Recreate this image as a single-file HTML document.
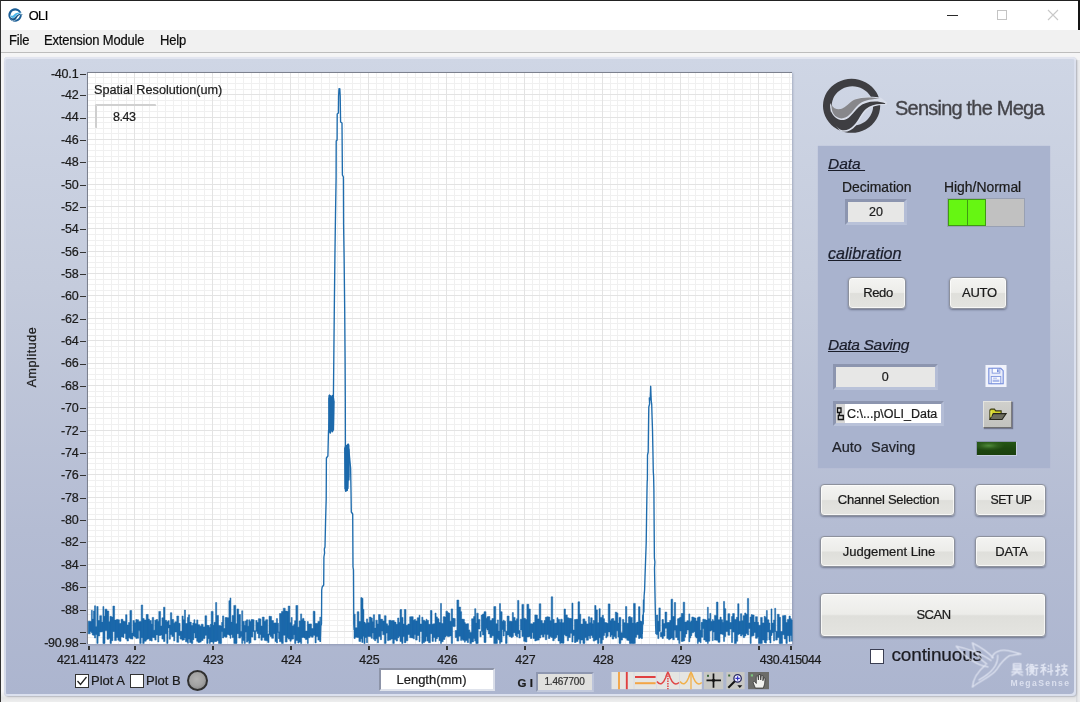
<!DOCTYPE html>
<html><head><meta charset="utf-8"><title>OLI</title>
<style>
*{box-sizing:border-box;margin:0;padding:0}
html,body{width:1080px;height:702px;overflow:hidden;background:#fff}
body{font-family:"Liberation Sans",sans-serif;color:#1c1c1c;position:relative;font-size:13px;-webkit-text-stroke:.22px currentColor}
.abs{position:absolute}
#win{position:absolute;left:0;top:0;width:1080px;height:702px;background:linear-gradient(180deg,#f5f5f6 0,#f5f5f6 690px,#e4e5e6 697px,#f0f0f0 702px);border-top:1px solid #222;border-left:1px solid #333}
#title{position:absolute;left:1px;top:1px;width:1078px;height:29px;background:#fff}
#rshadow{position:absolute;left:1078px;top:0;width:2px;height:31px;background:#151515}
#menu{position:absolute;left:1px;top:30px;width:1079px;height:22px;background:#f1f1f1}
#menuline{position:absolute;left:1px;top:52px;width:1079px;height:1px;background:#bdbdbd}
#menu span{position:absolute;top:1.500px;font-size:14.200px;color:#0c0c0c;white-space:nowrap;letter-spacing:-.2px;display:inline-block;transform:scaleX(.915);transform-origin:0 0}
#panel{position:absolute;left:4px;top:57px;width:1072px;height:638.500px;border-radius:4px;
 background:linear-gradient(180deg,#cfd6e5 0%,#c4cbdc 36%,#b4bcd3 74%,#acb5cf 100%);
 box-shadow:inset 0 2px 0 #e2e5f0, inset 2px 0 0 #d6dbea, inset -2px -2px 0 #dbe0ee, 1px 1px 1.500px #b4b6be}
#plot{position:absolute;left:87px;top:72px;width:705px;height:572px;background:#fff;border-top:1px solid #7c818e;border-left:1px solid #7c818e;box-shadow:1px 1px 2px rgba(90,100,130,.35)}
svg{position:absolute;left:0;top:0}
.gm{stroke:#f0f0f0;stroke-width:1}
.gM{stroke:#e3e3e3;stroke-width:1}
.yl{position:absolute;left:19.400px;width:59px;text-align:right;font-size:12.5px;height:18px;line-height:18px;color:#1b1b1b;letter-spacing:-.2px}
.ytk{position:absolute;left:80px;width:6px;height:1.6px;background:#333}
.xl{position:absolute;top:651px;width:40px;text-align:center;font-size:12.400px;height:18px;line-height:18px;color:#1b1b1b;letter-spacing:-.2px}
.xtk{position:absolute;top:646px;width:1.6px;height:4px;background:#333}
.t{position:absolute;white-space:nowrap;color:#1b1b1b}
.btn{position:absolute;border-radius:4px;background:linear-gradient(180deg,#f4f4f2 0%,#ecece9 48%,#dfdfdb 52%,#e4e4e0 100%);
 border:1px solid #8d919c;box-shadow:0 1px 2px rgba(60,65,85,.55), inset 0 0 0 1px rgba(255,255,255,.7);
 text-align:center;font-size:13px;color:#1a1a1a;white-space:nowrap}
.sunk{position:absolute;background:#e7e7e6;border:3px solid;border-color:#8c95af #b4bdd6 #b9c2d9 #8c95af;text-align:center;font-size:12.5px}
.hd{position:absolute;font-style:italic;font-size:15.5px;text-decoration:underline;color:#1a1d2a;white-space:pre}
.cb{position:absolute;width:14px;height:14px;background:#fff;border:1px solid #333}
#root{position:absolute;left:0;top:0;width:1080px;height:702px;overflow:hidden;will-change:transform;transform:translateZ(0)}
</style></head><body><div id="root">
<div id="win"></div>
<div id="title"></div>
<div id="rshadow"></div>
<!-- title icon -->
<svg class="abs" style="left:0;top:0" width="60" height="30" viewBox="0 0 60 30">
 <g transform="translate(6.500,6.600) scale(0.02334)">
  <path fill-rule="evenodd" fill="#1c5f97" d="M367 72 A287 287 0 1 1 366.900 72 Z M375 167 A195 195 0 1 0 375.100 167 Z"/>
  <path fill="#ffffff" d="M150 330 C175 385 215 400 260 392 C310 380 340 320 400 293 C470 262 580 262 662 278 L722 325 L717 352 C630 348 570 365 522 402 C472 447 452 512 407 562 C365 610 310 632 258 614 C200 560 150 450 150 330 Z"/>
  <path fill="#46b4ea" d="M165 335 C185 385 215 398 260 392 C310 380 345 312 400 287 C470 258 580 260 652 282 C580 290 500 300 450 335 C400 372 370 440 310 475 C260 500 210 480 185 440 C170 410 163 375 165 335 Z"/>
  <path fill="#1a5788" d="M158 410 C190 480 240 510 300 498 C350 485 385 420 440 370 C500 320 600 300 706 333 L700 342 C620 335 560 350 510 390 C460 435 440 500 395 550 C350 600 300 615 258 600 C190 560 150 480 158 410 Z"/>
 </g>
</svg>
<div class="t" style="left:28.700px;top:7.600px;font-size:12.800px;color:#000;letter-spacing:-.55px">OLI</div>
<!-- window buttons -->
<div class="abs" style="left:947px;top:14.500px;width:11px;height:1.200px;background:#2a2a2a"></div>
<div class="abs" style="left:997px;top:10px;width:10px;height:10px;border:1px solid #c4c4c4"></div>
<svg class="abs" style="left:1047px;top:9px" width="12" height="12"><path d="M1 1 L11 11 M11 1 L1 11" stroke="#c8c8c8" stroke-width="1.1" fill="none"/></svg>

<div id="menu"><span style="left:7.500px">File</span><span style="left:42.500px">Extension Module</span><span style="left:158.500px">Help</span></div>
<div id="menuline"></div>
<div class="abs" style="left:1076px;top:60px;width:4px;height:642px;background:linear-gradient(90deg,#d4d6da,#e8e9eb 60%,#ececee)"></div>
<div id="panel"></div>

<!-- plot -->
<div id="plot"></div>
<svg width="1080" height="702" viewBox="0 0 1080 702">
<g>
<line x1="95.5" y1="73.0" x2="95.5" y2="644.0" class="gm"/>
<line x1="103.5" y1="73.0" x2="103.5" y2="644.0" class="gm"/>
<line x1="111.5" y1="73.0" x2="111.5" y2="644.0" class="gm"/>
<line x1="118.5" y1="73.0" x2="118.5" y2="644.0" class="gm"/>
<line x1="126.5" y1="73.0" x2="126.5" y2="644.0" class="gm"/>
<line x1="134.5" y1="73.0" x2="134.5" y2="644.0" class="gm"/>
<line x1="142.5" y1="73.0" x2="142.5" y2="644.0" class="gm"/>
<line x1="149.5" y1="73.0" x2="149.5" y2="644.0" class="gm"/>
<line x1="157.5" y1="73.0" x2="157.5" y2="644.0" class="gm"/>
<line x1="165.5" y1="73.0" x2="165.5" y2="644.0" class="gm"/>
<line x1="173.5" y1="73.0" x2="173.5" y2="644.0" class="gm"/>
<line x1="181.5" y1="73.0" x2="181.5" y2="644.0" class="gm"/>
<line x1="188.5" y1="73.0" x2="188.5" y2="644.0" class="gm"/>
<line x1="196.5" y1="73.0" x2="196.5" y2="644.0" class="gm"/>
<line x1="204.5" y1="73.0" x2="204.5" y2="644.0" class="gm"/>
<line x1="212.5" y1="73.0" x2="212.5" y2="644.0" class="gm"/>
<line x1="220.5" y1="73.0" x2="220.5" y2="644.0" class="gm"/>
<line x1="227.5" y1="73.0" x2="227.5" y2="644.0" class="gm"/>
<line x1="235.5" y1="73.0" x2="235.5" y2="644.0" class="gm"/>
<line x1="243.5" y1="73.0" x2="243.5" y2="644.0" class="gm"/>
<line x1="251.5" y1="73.0" x2="251.5" y2="644.0" class="gm"/>
<line x1="259.5" y1="73.0" x2="259.5" y2="644.0" class="gm"/>
<line x1="266.5" y1="73.0" x2="266.5" y2="644.0" class="gm"/>
<line x1="274.5" y1="73.0" x2="274.5" y2="644.0" class="gm"/>
<line x1="282.5" y1="73.0" x2="282.5" y2="644.0" class="gm"/>
<line x1="290.5" y1="73.0" x2="290.5" y2="644.0" class="gm"/>
<line x1="298.5" y1="73.0" x2="298.5" y2="644.0" class="gm"/>
<line x1="305.5" y1="73.0" x2="305.5" y2="644.0" class="gm"/>
<line x1="313.5" y1="73.0" x2="313.5" y2="644.0" class="gm"/>
<line x1="321.5" y1="73.0" x2="321.5" y2="644.0" class="gm"/>
<line x1="329.5" y1="73.0" x2="329.5" y2="644.0" class="gm"/>
<line x1="337.5" y1="73.0" x2="337.5" y2="644.0" class="gm"/>
<line x1="344.5" y1="73.0" x2="344.5" y2="644.0" class="gm"/>
<line x1="352.5" y1="73.0" x2="352.5" y2="644.0" class="gm"/>
<line x1="360.5" y1="73.0" x2="360.5" y2="644.0" class="gm"/>
<line x1="368.5" y1="73.0" x2="368.5" y2="644.0" class="gm"/>
<line x1="376.5" y1="73.0" x2="376.5" y2="644.0" class="gm"/>
<line x1="383.5" y1="73.0" x2="383.5" y2="644.0" class="gm"/>
<line x1="391.5" y1="73.0" x2="391.5" y2="644.0" class="gm"/>
<line x1="399.5" y1="73.0" x2="399.5" y2="644.0" class="gm"/>
<line x1="407.5" y1="73.0" x2="407.5" y2="644.0" class="gm"/>
<line x1="415.5" y1="73.0" x2="415.5" y2="644.0" class="gm"/>
<line x1="422.5" y1="73.0" x2="422.5" y2="644.0" class="gm"/>
<line x1="430.5" y1="73.0" x2="430.5" y2="644.0" class="gm"/>
<line x1="438.5" y1="73.0" x2="438.5" y2="644.0" class="gm"/>
<line x1="446.5" y1="73.0" x2="446.5" y2="644.0" class="gm"/>
<line x1="454.5" y1="73.0" x2="454.5" y2="644.0" class="gm"/>
<line x1="461.5" y1="73.0" x2="461.5" y2="644.0" class="gm"/>
<line x1="469.5" y1="73.0" x2="469.5" y2="644.0" class="gm"/>
<line x1="477.5" y1="73.0" x2="477.5" y2="644.0" class="gm"/>
<line x1="485.5" y1="73.0" x2="485.5" y2="644.0" class="gm"/>
<line x1="493.5" y1="73.0" x2="493.5" y2="644.0" class="gm"/>
<line x1="500.5" y1="73.0" x2="500.5" y2="644.0" class="gm"/>
<line x1="508.5" y1="73.0" x2="508.5" y2="644.0" class="gm"/>
<line x1="516.5" y1="73.0" x2="516.5" y2="644.0" class="gm"/>
<line x1="524.5" y1="73.0" x2="524.5" y2="644.0" class="gm"/>
<line x1="532.5" y1="73.0" x2="532.5" y2="644.0" class="gm"/>
<line x1="539.5" y1="73.0" x2="539.5" y2="644.0" class="gm"/>
<line x1="547.5" y1="73.0" x2="547.5" y2="644.0" class="gm"/>
<line x1="555.5" y1="73.0" x2="555.5" y2="644.0" class="gm"/>
<line x1="563.5" y1="73.0" x2="563.5" y2="644.0" class="gm"/>
<line x1="571.5" y1="73.0" x2="571.5" y2="644.0" class="gm"/>
<line x1="578.5" y1="73.0" x2="578.5" y2="644.0" class="gm"/>
<line x1="586.5" y1="73.0" x2="586.5" y2="644.0" class="gm"/>
<line x1="594.5" y1="73.0" x2="594.5" y2="644.0" class="gm"/>
<line x1="602.5" y1="73.0" x2="602.5" y2="644.0" class="gm"/>
<line x1="610.5" y1="73.0" x2="610.5" y2="644.0" class="gm"/>
<line x1="617.5" y1="73.0" x2="617.5" y2="644.0" class="gm"/>
<line x1="625.5" y1="73.0" x2="625.5" y2="644.0" class="gm"/>
<line x1="633.5" y1="73.0" x2="633.5" y2="644.0" class="gm"/>
<line x1="641.5" y1="73.0" x2="641.5" y2="644.0" class="gm"/>
<line x1="649.5" y1="73.0" x2="649.5" y2="644.0" class="gm"/>
<line x1="656.5" y1="73.0" x2="656.5" y2="644.0" class="gm"/>
<line x1="664.5" y1="73.0" x2="664.5" y2="644.0" class="gm"/>
<line x1="672.5" y1="73.0" x2="672.5" y2="644.0" class="gm"/>
<line x1="680.5" y1="73.0" x2="680.5" y2="644.0" class="gm"/>
<line x1="688.5" y1="73.0" x2="688.5" y2="644.0" class="gm"/>
<line x1="695.5" y1="73.0" x2="695.5" y2="644.0" class="gm"/>
<line x1="703.5" y1="73.0" x2="703.5" y2="644.0" class="gm"/>
<line x1="711.5" y1="73.0" x2="711.5" y2="644.0" class="gm"/>
<line x1="719.5" y1="73.0" x2="719.5" y2="644.0" class="gm"/>
<line x1="727.5" y1="73.0" x2="727.5" y2="644.0" class="gm"/>
<line x1="734.5" y1="73.0" x2="734.5" y2="644.0" class="gm"/>
<line x1="742.5" y1="73.0" x2="742.5" y2="644.0" class="gm"/>
<line x1="750.5" y1="73.0" x2="750.5" y2="644.0" class="gm"/>
<line x1="758.5" y1="73.0" x2="758.5" y2="644.0" class="gm"/>
<line x1="766.5" y1="73.0" x2="766.5" y2="644.0" class="gm"/>
<line x1="773.5" y1="73.0" x2="773.5" y2="644.0" class="gm"/>
<line x1="781.5" y1="73.0" x2="781.5" y2="644.0" class="gm"/>
<line x1="789.5" y1="73.0" x2="789.5" y2="644.0" class="gm"/>
<line x1="88.0" y1="77.5" x2="792.0" y2="77.5" class="gm"/>
<line x1="88.0" y1="83.5" x2="792.0" y2="83.5" class="gm"/>
<line x1="88.0" y1="89.5" x2="792.0" y2="89.5" class="gm"/>
<line x1="88.0" y1="94.5" x2="792.0" y2="94.5" class="gm"/>
<line x1="88.0" y1="100.5" x2="792.0" y2="100.5" class="gm"/>
<line x1="88.0" y1="105.5" x2="792.0" y2="105.5" class="gm"/>
<line x1="88.0" y1="111.5" x2="792.0" y2="111.5" class="gm"/>
<line x1="88.0" y1="117.5" x2="792.0" y2="117.5" class="gm"/>
<line x1="88.0" y1="122.5" x2="792.0" y2="122.5" class="gm"/>
<line x1="88.0" y1="128.5" x2="792.0" y2="128.5" class="gm"/>
<line x1="88.0" y1="133.5" x2="792.0" y2="133.5" class="gm"/>
<line x1="88.0" y1="139.5" x2="792.0" y2="139.5" class="gm"/>
<line x1="88.0" y1="144.5" x2="792.0" y2="144.5" class="gm"/>
<line x1="88.0" y1="150.5" x2="792.0" y2="150.5" class="gm"/>
<line x1="88.0" y1="156.5" x2="792.0" y2="156.5" class="gm"/>
<line x1="88.0" y1="161.5" x2="792.0" y2="161.5" class="gm"/>
<line x1="88.0" y1="167.5" x2="792.0" y2="167.5" class="gm"/>
<line x1="88.0" y1="172.5" x2="792.0" y2="172.5" class="gm"/>
<line x1="88.0" y1="178.5" x2="792.0" y2="178.5" class="gm"/>
<line x1="88.0" y1="184.5" x2="792.0" y2="184.5" class="gm"/>
<line x1="88.0" y1="189.5" x2="792.0" y2="189.5" class="gm"/>
<line x1="88.0" y1="195.5" x2="792.0" y2="195.5" class="gm"/>
<line x1="88.0" y1="200.5" x2="792.0" y2="200.5" class="gm"/>
<line x1="88.0" y1="206.5" x2="792.0" y2="206.5" class="gm"/>
<line x1="88.0" y1="212.5" x2="792.0" y2="212.5" class="gm"/>
<line x1="88.0" y1="217.5" x2="792.0" y2="217.5" class="gm"/>
<line x1="88.0" y1="223.5" x2="792.0" y2="223.5" class="gm"/>
<line x1="88.0" y1="228.5" x2="792.0" y2="228.5" class="gm"/>
<line x1="88.0" y1="234.5" x2="792.0" y2="234.5" class="gm"/>
<line x1="88.0" y1="240.5" x2="792.0" y2="240.5" class="gm"/>
<line x1="88.0" y1="245.5" x2="792.0" y2="245.5" class="gm"/>
<line x1="88.0" y1="251.5" x2="792.0" y2="251.5" class="gm"/>
<line x1="88.0" y1="256.5" x2="792.0" y2="256.5" class="gm"/>
<line x1="88.0" y1="262.5" x2="792.0" y2="262.5" class="gm"/>
<line x1="88.0" y1="267.5" x2="792.0" y2="267.5" class="gm"/>
<line x1="88.0" y1="273.5" x2="792.0" y2="273.5" class="gm"/>
<line x1="88.0" y1="279.5" x2="792.0" y2="279.5" class="gm"/>
<line x1="88.0" y1="284.5" x2="792.0" y2="284.5" class="gm"/>
<line x1="88.0" y1="290.5" x2="792.0" y2="290.5" class="gm"/>
<line x1="88.0" y1="295.5" x2="792.0" y2="295.5" class="gm"/>
<line x1="88.0" y1="301.5" x2="792.0" y2="301.5" class="gm"/>
<line x1="88.0" y1="307.5" x2="792.0" y2="307.5" class="gm"/>
<line x1="88.0" y1="312.5" x2="792.0" y2="312.5" class="gm"/>
<line x1="88.0" y1="318.5" x2="792.0" y2="318.5" class="gm"/>
<line x1="88.0" y1="323.5" x2="792.0" y2="323.5" class="gm"/>
<line x1="88.0" y1="329.5" x2="792.0" y2="329.5" class="gm"/>
<line x1="88.0" y1="335.5" x2="792.0" y2="335.5" class="gm"/>
<line x1="88.0" y1="340.5" x2="792.0" y2="340.5" class="gm"/>
<line x1="88.0" y1="346.5" x2="792.0" y2="346.5" class="gm"/>
<line x1="88.0" y1="351.5" x2="792.0" y2="351.5" class="gm"/>
<line x1="88.0" y1="357.5" x2="792.0" y2="357.5" class="gm"/>
<line x1="88.0" y1="363.5" x2="792.0" y2="363.5" class="gm"/>
<line x1="88.0" y1="368.5" x2="792.0" y2="368.5" class="gm"/>
<line x1="88.0" y1="374.5" x2="792.0" y2="374.5" class="gm"/>
<line x1="88.0" y1="379.5" x2="792.0" y2="379.5" class="gm"/>
<line x1="88.0" y1="385.5" x2="792.0" y2="385.5" class="gm"/>
<line x1="88.0" y1="391.5" x2="792.0" y2="391.5" class="gm"/>
<line x1="88.0" y1="396.5" x2="792.0" y2="396.5" class="gm"/>
<line x1="88.0" y1="402.5" x2="792.0" y2="402.5" class="gm"/>
<line x1="88.0" y1="407.5" x2="792.0" y2="407.5" class="gm"/>
<line x1="88.0" y1="413.5" x2="792.0" y2="413.5" class="gm"/>
<line x1="88.0" y1="418.5" x2="792.0" y2="418.5" class="gm"/>
<line x1="88.0" y1="424.5" x2="792.0" y2="424.5" class="gm"/>
<line x1="88.0" y1="430.5" x2="792.0" y2="430.5" class="gm"/>
<line x1="88.0" y1="435.5" x2="792.0" y2="435.5" class="gm"/>
<line x1="88.0" y1="441.5" x2="792.0" y2="441.5" class="gm"/>
<line x1="88.0" y1="446.5" x2="792.0" y2="446.5" class="gm"/>
<line x1="88.0" y1="452.5" x2="792.0" y2="452.5" class="gm"/>
<line x1="88.0" y1="458.5" x2="792.0" y2="458.5" class="gm"/>
<line x1="88.0" y1="463.5" x2="792.0" y2="463.5" class="gm"/>
<line x1="88.0" y1="469.5" x2="792.0" y2="469.5" class="gm"/>
<line x1="88.0" y1="474.5" x2="792.0" y2="474.5" class="gm"/>
<line x1="88.0" y1="480.5" x2="792.0" y2="480.5" class="gm"/>
<line x1="88.0" y1="486.5" x2="792.0" y2="486.5" class="gm"/>
<line x1="88.0" y1="491.5" x2="792.0" y2="491.5" class="gm"/>
<line x1="88.0" y1="497.5" x2="792.0" y2="497.5" class="gm"/>
<line x1="88.0" y1="502.5" x2="792.0" y2="502.5" class="gm"/>
<line x1="88.0" y1="508.5" x2="792.0" y2="508.5" class="gm"/>
<line x1="88.0" y1="514.5" x2="792.0" y2="514.5" class="gm"/>
<line x1="88.0" y1="519.5" x2="792.0" y2="519.5" class="gm"/>
<line x1="88.0" y1="525.5" x2="792.0" y2="525.5" class="gm"/>
<line x1="88.0" y1="530.5" x2="792.0" y2="530.5" class="gm"/>
<line x1="88.0" y1="536.5" x2="792.0" y2="536.5" class="gm"/>
<line x1="88.0" y1="541.5" x2="792.0" y2="541.5" class="gm"/>
<line x1="88.0" y1="547.5" x2="792.0" y2="547.5" class="gm"/>
<line x1="88.0" y1="553.5" x2="792.0" y2="553.5" class="gm"/>
<line x1="88.0" y1="558.5" x2="792.0" y2="558.5" class="gm"/>
<line x1="88.0" y1="564.5" x2="792.0" y2="564.5" class="gm"/>
<line x1="88.0" y1="569.5" x2="792.0" y2="569.5" class="gm"/>
<line x1="88.0" y1="575.5" x2="792.0" y2="575.5" class="gm"/>
<line x1="88.0" y1="581.5" x2="792.0" y2="581.5" class="gm"/>
<line x1="88.0" y1="586.5" x2="792.0" y2="586.5" class="gm"/>
<line x1="88.0" y1="592.5" x2="792.0" y2="592.5" class="gm"/>
<line x1="88.0" y1="597.5" x2="792.0" y2="597.5" class="gm"/>
<line x1="88.0" y1="603.5" x2="792.0" y2="603.5" class="gm"/>
<line x1="88.0" y1="609.5" x2="792.0" y2="609.5" class="gm"/>
<line x1="88.0" y1="614.5" x2="792.0" y2="614.5" class="gm"/>
<line x1="88.0" y1="620.5" x2="792.0" y2="620.5" class="gm"/>
<line x1="88.0" y1="625.5" x2="792.0" y2="625.5" class="gm"/>
<line x1="88.0" y1="631.5" x2="792.0" y2="631.5" class="gm"/>
<line x1="88.0" y1="637.5" x2="792.0" y2="637.5" class="gm"/>
<line x1="134.5" y1="73.0" x2="134.5" y2="644.0" class="gM"/>
<line x1="212.5" y1="73.0" x2="212.5" y2="644.0" class="gM"/>
<line x1="290.5" y1="73.0" x2="290.5" y2="644.0" class="gM"/>
<line x1="368.5" y1="73.0" x2="368.5" y2="644.0" class="gM"/>
<line x1="446.5" y1="73.0" x2="446.5" y2="644.0" class="gM"/>
<line x1="524.5" y1="73.0" x2="524.5" y2="644.0" class="gM"/>
<line x1="602.5" y1="73.0" x2="602.5" y2="644.0" class="gM"/>
<line x1="680.5" y1="73.0" x2="680.5" y2="644.0" class="gM"/>
<line x1="758.5" y1="73.0" x2="758.5" y2="644.0" class="gM"/>
<line x1="88.0" y1="94.5" x2="792.0" y2="94.5" class="gM"/>
<line x1="88.0" y1="117.5" x2="792.0" y2="117.5" class="gM"/>
<line x1="88.0" y1="139.5" x2="792.0" y2="139.5" class="gM"/>
<line x1="88.0" y1="161.5" x2="792.0" y2="161.5" class="gM"/>
<line x1="88.0" y1="184.5" x2="792.0" y2="184.5" class="gM"/>
<line x1="88.0" y1="206.5" x2="792.0" y2="206.5" class="gM"/>
<line x1="88.0" y1="228.5" x2="792.0" y2="228.5" class="gM"/>
<line x1="88.0" y1="251.5" x2="792.0" y2="251.5" class="gM"/>
<line x1="88.0" y1="273.5" x2="792.0" y2="273.5" class="gM"/>
<line x1="88.0" y1="295.5" x2="792.0" y2="295.5" class="gM"/>
<line x1="88.0" y1="318.5" x2="792.0" y2="318.5" class="gM"/>
<line x1="88.0" y1="340.5" x2="792.0" y2="340.5" class="gM"/>
<line x1="88.0" y1="363.5" x2="792.0" y2="363.5" class="gM"/>
<line x1="88.0" y1="385.5" x2="792.0" y2="385.5" class="gM"/>
<line x1="88.0" y1="407.5" x2="792.0" y2="407.5" class="gM"/>
<line x1="88.0" y1="430.5" x2="792.0" y2="430.5" class="gM"/>
<line x1="88.0" y1="452.5" x2="792.0" y2="452.5" class="gM"/>
<line x1="88.0" y1="474.5" x2="792.0" y2="474.5" class="gM"/>
<line x1="88.0" y1="497.5" x2="792.0" y2="497.5" class="gM"/>
<line x1="88.0" y1="519.5" x2="792.0" y2="519.5" class="gM"/>
<line x1="88.0" y1="541.5" x2="792.0" y2="541.5" class="gM"/>
<line x1="88.0" y1="564.5" x2="792.0" y2="564.5" class="gM"/>
<line x1="88.0" y1="586.5" x2="792.0" y2="586.5" class="gM"/>
<line x1="88.0" y1="609.5" x2="792.0" y2="609.5" class="gM"/>
<line x1="88.0" y1="631.5" x2="792.0" y2="631.5" class="gM"/>
</g>
<path d="M88.2 621.2 H90.2 V633.8 H88.2 ZM90.2 621.6 H91.4 V631.4 H90.2 ZM91.4 610.3 H92.3 V632.8 H91.4 ZM92.3 619.1 H93.4 V635.0 H92.3 ZM93.4 610.9 H94.5 V635.3 H93.4 ZM94.5 605.8 H95.6 V638.0 H94.5 ZM95.6 626.7 H96.8 V634.5 H95.6 ZM96.8 606.5 H98.1 V643.4 H96.8 ZM98.1 620.6 H99.7 V636.0 H98.1 ZM99.7 615.7 H101.6 V632.0 H99.7 ZM101.6 622.1 H102.9 V631.8 H101.6 ZM102.9 606.6 H103.9 V643.4 H102.9 ZM103.9 616.2 H105.0 V643.4 H103.9 ZM105.0 609.2 H107.0 V630.5 H105.0 ZM107.0 611.0 H108.8 V639.3 H107.0 ZM108.8 621.8 H110.0 V638.3 H108.8 ZM110.0 616.3 H111.4 V643.4 H110.0 ZM111.4 617.1 H112.9 V640.7 H111.4 ZM112.9 606.1 H114.6 V631.5 H112.9 ZM114.6 620.1 H116.4 V640.6 H114.6 ZM116.4 619.4 H117.9 V637.5 H116.4 ZM117.9 619.8 H119.4 V640.2 H117.9 ZM119.4 623.5 H121.0 V641.3 H119.4 ZM121.0 619.3 H123.0 V636.9 H121.0 ZM123.0 621.3 H124.0 V637.5 H123.0 ZM124.0 621.4 H125.6 V633.6 H124.0 ZM125.6 614.7 H127.0 V639.1 H125.6 ZM127.0 625.0 H128.5 V641.0 H127.0 ZM128.5 622.4 H129.9 V637.8 H128.5 ZM129.9 610.5 H131.7 V638.8 H129.9 ZM131.7 632.9 H132.9 V639.1 H131.7 ZM132.9 620.6 H134.4 V636.0 H132.9 ZM134.4 622.8 H135.8 V637.1 H134.4 ZM135.8 619.5 H136.7 V638.4 H135.8 ZM136.7 619.8 H138.6 V638.3 H136.7 ZM138.6 621.7 H139.7 V630.4 H138.6 ZM139.7 621.6 H141.2 V643.4 H139.7 ZM141.2 605.0 H142.7 V637.7 H141.2 ZM142.7 618.6 H144.2 V643.4 H142.7 ZM144.2 620.0 H146.2 V641.2 H144.2 ZM146.2 614.5 H147.1 V639.7 H146.2 ZM147.1 614.4 H148.2 V639.1 H147.1 ZM148.2 619.0 H149.4 V638.8 H148.2 ZM149.4 620.6 H151.3 V640.5 H149.4 ZM151.3 624.0 H152.2 V641.1 H151.3 ZM152.2 617.4 H153.7 V637.4 H152.2 ZM153.7 630.2 H154.8 V637.8 H153.7 ZM154.8 620.2 H156.1 V640.1 H154.8 ZM156.1 619.5 H157.8 V634.9 H156.1 ZM157.8 621.4 H158.8 V642.0 H157.8 ZM158.8 611.4 H160.6 V635.5 H158.8 ZM160.6 626.1 H161.9 V635.1 H160.6 ZM161.9 617.8 H163.5 V639.1 H161.9 ZM163.5 607.2 H165.0 V641.5 H163.5 ZM165.0 620.3 H166.7 V633.8 H165.0 ZM166.7 621.8 H168.0 V643.4 H166.7 ZM168.0 620.7 H169.2 V627.9 H168.0 ZM169.2 625.0 H170.4 V639.2 H169.2 ZM170.4 612.7 H171.8 V634.5 H170.4 ZM171.8 619.5 H173.7 V636.5 H171.8 ZM173.7 623.2 H174.8 V640.9 H173.7 ZM174.8 621.8 H176.8 V632.0 H174.8 ZM176.8 616.0 H178.7 V642.3 H176.8 ZM178.7 623.3 H180.1 V635.5 H178.7 ZM180.1 631.3 H182.0 V639.1 H180.1 ZM182.0 616.0 H183.2 V640.2 H182.0 ZM183.2 619.7 H184.4 V639.9 H183.2 ZM184.4 610.1 H185.5 V638.0 H184.4 ZM185.5 623.5 H187.4 V641.8 H185.5 ZM187.4 617.4 H188.4 V643.2 H187.4 ZM188.4 614.8 H189.6 V639.1 H188.4 ZM189.6 622.1 H191.3 V642.6 H189.6 ZM191.3 625.6 H192.8 V643.4 H191.3 ZM192.8 623.0 H193.9 V639.7 H192.8 ZM193.9 619.7 H194.9 V633.0 H193.9 ZM194.9 623.7 H196.7 V637.9 H194.9 ZM196.7 619.9 H197.9 V641.3 H196.7 ZM197.9 624.7 H199.8 V642.4 H197.9 ZM199.8 626.2 H201.2 V642.1 H199.8 ZM201.2 624.2 H203.1 V640.5 H201.2 ZM203.1 626.9 H205.0 V638.6 H203.1 ZM205.0 615.8 H206.7 V635.3 H205.0 ZM206.7 625.3 H208.1 V643.4 H206.7 ZM208.1 625.5 H209.3 V638.8 H208.1 ZM209.3 627.4 H210.3 V643.4 H209.3 ZM210.3 624.3 H211.2 V641.9 H210.3 ZM211.2 611.4 H213.1 V641.9 H211.2 ZM213.1 625.3 H214.0 V643.4 H213.1 ZM214.0 622.2 H215.6 V641.5 H214.0 ZM215.6 602.5 H216.7 V641.5 H215.6 ZM216.7 615.5 H218.5 V640.8 H216.7 ZM218.5 625.4 H220.5 V643.4 H218.5 ZM220.5 626.1 H221.6 V643.4 H220.5 ZM221.6 622.3 H222.5 V631.6 H221.6 ZM222.5 615.9 H223.8 V637.9 H222.5 ZM223.8 628.6 H225.1 V636.4 H223.8 ZM225.1 617.5 H227.0 V637.2 H225.1 ZM227.0 617.8 H228.9 V634.4 H227.0 ZM228.9 600.7 H230.0 V635.2 H228.9 ZM230.0 598.0 H230.9 V638.3 H230.0 ZM230.9 622.1 H232.1 V634.5 H230.9 ZM232.1 615.6 H233.8 V637.6 H232.1 ZM233.8 605.4 H235.8 V643.4 H233.8 ZM235.8 623.8 H237.0 V643.4 H235.8 ZM237.0 609.0 H238.7 V633.7 H237.0 ZM238.7 614.5 H240.5 V638.1 H238.7 ZM240.5 631.4 H241.7 V636.6 H240.5 ZM241.7 610.8 H242.7 V643.4 H241.7 ZM242.7 621.3 H244.3 V640.6 H242.7 ZM244.3 625.4 H245.3 V643.4 H244.3 ZM245.3 621.0 H246.4 V632.1 H245.3 ZM246.4 619.8 H247.8 V642.1 H246.4 ZM247.8 626.3 H248.8 V640.8 H247.8 ZM248.8 619.8 H249.7 V643.4 H248.8 ZM249.7 621.6 H251.0 V642.8 H249.7 ZM251.0 619.6 H252.9 V637.1 H251.0 ZM252.9 619.8 H254.1 V631.4 H252.9 ZM254.1 630.7 H255.8 V640.0 H254.1 ZM255.8 620.5 H257.1 V631.2 H255.8 ZM257.1 622.5 H258.4 V633.5 H257.1 ZM258.4 618.7 H259.8 V638.1 H258.4 ZM259.8 618.9 H260.9 V634.4 H259.8 ZM260.9 626.1 H262.3 V640.3 H260.9 ZM262.3 617.1 H264.2 V637.4 H262.3 ZM264.2 621.2 H265.7 V640.3 H264.2 ZM265.7 619.7 H267.7 V640.8 H265.7 ZM267.7 634.0 H269.0 V642.6 H267.7 ZM269.0 616.2 H270.1 V634.7 H269.0 ZM270.1 616.4 H271.6 V636.4 H270.1 ZM271.6 620.6 H273.5 V638.3 H271.6 ZM273.5 623.0 H275.0 V633.7 H273.5 ZM275.0 622.9 H276.4 V641.6 H275.0 ZM276.4 618.6 H277.5 V642.9 H276.4 ZM277.5 623.2 H278.5 V632.4 H277.5 ZM278.5 631.9 H279.5 V638.7 H278.5 ZM279.5 613.5 H281.5 V641.8 H279.5 ZM281.5 611.4 H283.3 V643.4 H281.5 ZM283.3 608.2 H285.2 V635.2 H283.3 ZM285.2 611.1 H287.1 V642.0 H285.2 ZM287.1 611.4 H288.2 V637.7 H287.1 ZM288.2 606.1 H289.9 V639.1 H288.2 ZM289.9 622.7 H291.2 V641.2 H289.9 ZM291.2 617.5 H292.2 V639.3 H291.2 ZM292.2 625.9 H293.7 V639.0 H292.2 ZM293.7 624.6 H294.6 V634.7 H293.7 ZM294.6 620.8 H295.9 V643.4 H294.6 ZM295.9 605.5 H297.8 V640.4 H295.9 ZM297.8 627.2 H299.1 V642.9 H297.8 ZM299.1 620.9 H300.6 V642.0 H299.1 ZM300.6 613.9 H301.7 V643.4 H300.6 ZM301.7 619.7 H302.6 V637.5 H301.7 ZM302.6 618.4 H304.0 V637.3 H302.6 ZM304.0 621.1 H305.3 V637.9 H304.0 ZM305.3 631.1 H307.3 V639.4 H305.3 ZM307.3 621.6 H308.3 V643.4 H307.3 ZM308.3 624.1 H310.1 V637.7 H308.3 ZM310.1 623.9 H311.5 V636.2 H310.1 ZM311.5 628.6 H313.2 V637.3 H311.5 ZM313.2 611.3 H315.0 V635.3 H313.2 ZM315.0 623.4 H316.2 V642.9 H315.0 ZM316.2 623.6 H317.9 V636.6 H316.2 ZM317.9 621.4 H319.8 V640.1 H317.9 ZM319.8 617.1 H320.6 V641.5 H319.8 Z M354.0 614.2 H355.2 V638.5 H354.0 ZM355.2 627.8 H357.2 V637.2 H355.2 ZM357.2 611.7 H358.9 V637.4 H357.2 ZM358.9 621.5 H360.8 V641.4 H358.9 ZM360.8 597.6 H361.8 V638.8 H360.8 ZM361.8 598.3 H363.0 V642.4 H361.8 ZM363.0 609.4 H363.9 V636.2 H363.0 ZM363.9 622.1 H365.1 V643.4 H363.9 ZM365.1 623.4 H366.5 V637.5 H365.1 ZM366.5 618.9 H367.6 V642.7 H366.5 ZM367.6 622.7 H369.3 V636.4 H367.6 ZM369.3 617.1 H371.1 V636.4 H369.3 ZM371.1 618.0 H372.3 V638.3 H371.1 ZM372.3 621.8 H373.3 V633.0 H372.3 ZM373.3 614.7 H374.6 V639.2 H373.3 ZM374.6 628.1 H375.8 V640.7 H374.6 ZM375.8 620.2 H377.3 V638.8 H375.8 ZM377.3 623.9 H378.5 V642.8 H377.3 ZM378.5 614.6 H380.3 V636.6 H378.5 ZM380.3 619.2 H381.5 V639.7 H380.3 ZM381.5 619.3 H382.7 V630.9 H381.5 ZM382.7 620.9 H384.4 V634.8 H382.7 ZM384.4 615.7 H386.1 V643.4 H384.4 ZM386.1 623.8 H387.5 V633.1 H386.1 ZM387.5 625.7 H388.9 V640.6 H387.5 ZM388.9 620.3 H390.8 V640.1 H388.9 ZM390.8 620.7 H392.7 V639.0 H390.8 ZM392.7 620.6 H394.3 V643.4 H392.7 ZM394.3 622.1 H396.0 V639.5 H394.3 ZM396.0 624.3 H397.6 V641.0 H396.0 ZM397.6 618.0 H398.9 V637.7 H397.6 ZM398.9 622.6 H400.0 V636.2 H398.9 ZM400.0 609.6 H401.7 V641.5 H400.0 ZM401.7 617.4 H403.0 V643.4 H401.7 ZM403.0 624.0 H404.3 V636.4 H403.0 ZM404.3 609.5 H406.0 V642.7 H404.3 ZM406.0 625.3 H407.9 V640.7 H406.0 ZM407.9 624.0 H409.7 V634.5 H407.9 ZM409.7 616.8 H411.7 V637.7 H409.7 ZM411.7 616.7 H413.2 V637.9 H411.7 ZM413.2 620.2 H414.4 V638.8 H413.2 ZM414.4 619.5 H415.6 V634.6 H414.4 ZM415.6 620.9 H417.2 V640.1 H415.6 ZM417.2 617.8 H419.1 V635.5 H417.2 ZM419.1 615.2 H420.0 V641.7 H419.1 ZM420.0 624.0 H421.8 V631.5 H420.0 ZM421.8 617.2 H422.9 V643.4 H421.8 ZM422.9 620.2 H424.7 V642.6 H422.9 ZM424.7 621.2 H426.1 V641.3 H424.7 ZM426.1 619.2 H427.0 V636.5 H426.1 ZM427.0 620.4 H428.5 V641.1 H427.0 ZM428.5 624.3 H430.4 V642.7 H428.5 ZM430.4 610.5 H432.0 V633.7 H430.4 ZM432.0 624.2 H433.4 V641.4 H432.0 ZM433.4 623.8 H435.0 V637.4 H433.4 ZM435.0 613.1 H436.1 V641.6 H435.0 ZM436.1 616.9 H437.4 V638.7 H436.1 ZM437.4 618.7 H439.0 V636.9 H437.4 ZM439.0 622.6 H440.5 V640.7 H439.0 ZM440.5 603.4 H441.5 V643.4 H440.5 ZM441.5 623.4 H443.2 V641.7 H441.5 ZM443.2 616.7 H444.9 V639.5 H443.2 ZM444.9 617.1 H445.9 V636.9 H444.9 ZM445.9 611.2 H447.5 V635.7 H445.9 ZM447.5 612.7 H448.9 V636.6 H447.5 ZM448.9 613.3 H449.8 V636.3 H448.9 ZM449.8 621.3 H451.2 V635.9 H449.8 ZM451.2 608.9 H452.6 V643.4 H451.2 ZM452.6 618.3 H453.5 V626.2 H452.6 ZM453.5 618.5 H455.2 V626.6 H453.5 ZM455.2 630.5 H456.9 V637.6 H455.2 ZM456.9 600.1 H458.8 V641.1 H456.9 ZM458.8 607.1 H460.6 V636.2 H458.8 ZM460.6 611.7 H461.6 V640.4 H460.6 ZM461.6 619.1 H462.6 V639.2 H461.6 ZM462.6 619.3 H464.4 V640.3 H462.6 ZM464.4 622.6 H465.3 V642.2 H464.4 ZM465.3 623.9 H467.2 V640.4 H465.3 ZM467.2 623.7 H468.5 V642.6 H467.2 ZM468.5 629.9 H469.8 V638.3 H468.5 ZM469.8 632.4 H471.6 V643.4 H469.8 ZM471.6 618.8 H473.6 V641.9 H471.6 ZM473.6 616.6 H474.7 V638.4 H473.6 ZM474.7 608.7 H475.8 V641.1 H474.7 ZM475.8 623.0 H476.7 V643.4 H475.8 ZM476.7 613.2 H478.2 V643.4 H476.7 ZM478.2 619.4 H479.9 V629.0 H478.2 ZM479.9 631.5 H481.2 V636.8 H479.9 ZM481.2 615.1 H482.5 V631.3 H481.2 ZM482.5 614.0 H484.0 V634.9 H482.5 ZM484.0 611.7 H486.0 V642.5 H484.0 ZM486.0 618.5 H486.9 V628.2 H486.0 ZM486.9 616.8 H488.3 V630.1 H486.9 ZM488.3 616.5 H489.9 V633.9 H488.3 ZM489.9 620.4 H491.9 V637.4 H489.9 ZM491.9 618.6 H493.8 V635.8 H491.9 ZM493.8 606.6 H495.8 V643.4 H493.8 ZM495.8 623.8 H497.4 V643.4 H495.8 ZM497.4 619.9 H498.4 V638.6 H497.4 ZM498.4 631.1 H499.5 V640.0 H498.4 ZM499.5 603.6 H500.5 V643.4 H499.5 ZM500.5 611.7 H502.1 V642.1 H500.5 ZM502.1 621.6 H503.1 V629.6 H502.1 ZM503.1 620.2 H504.2 V636.0 H503.1 ZM504.2 621.3 H505.5 V631.2 H504.2 ZM505.5 631.2 H507.1 V643.4 H505.5 ZM507.1 616.1 H509.1 V634.9 H507.1 ZM509.1 621.3 H511.0 V636.5 H509.1 ZM511.0 621.5 H512.3 V637.6 H511.0 ZM512.3 612.6 H513.4 V636.5 H512.3 ZM513.4 617.4 H515.1 V632.7 H513.4 ZM515.1 620.7 H516.5 V635.6 H515.1 ZM516.5 618.8 H517.6 V637.1 H516.5 ZM517.6 600.4 H518.9 V633.7 H517.6 ZM518.9 630.6 H520.3 V638.0 H518.9 ZM520.3 619.2 H521.9 V630.1 H520.3 ZM521.9 604.4 H523.7 V636.5 H521.9 ZM523.7 618.3 H525.4 V641.3 H523.7 ZM525.4 619.5 H526.9 V642.0 H525.4 ZM526.9 604.3 H528.8 V636.9 H526.9 ZM528.8 609.0 H530.3 V636.5 H528.8 ZM530.3 623.8 H532.0 V638.4 H530.3 ZM532.0 624.0 H533.0 V632.4 H532.0 ZM533.0 622.4 H534.8 V638.4 H533.0 ZM534.8 614.9 H536.2 V640.9 H534.8 ZM536.2 615.1 H537.4 V640.3 H536.2 ZM537.4 618.9 H539.2 V640.1 H537.4 ZM539.2 603.8 H540.8 V638.0 H539.2 ZM540.8 620.6 H542.3 V634.8 H540.8 ZM542.3 623.2 H544.1 V637.1 H542.3 ZM544.1 620.6 H545.3 V634.2 H544.1 ZM545.3 617.3 H546.8 V639.7 H545.3 ZM546.8 616.8 H548.4 V634.6 H546.8 ZM548.4 617.1 H549.9 V638.5 H548.4 ZM549.9 620.8 H551.2 V636.6 H549.9 ZM551.2 596.8 H552.7 V637.5 H551.2 ZM552.7 619.5 H554.2 V640.7 H552.7 ZM554.2 623.3 H555.5 V638.5 H554.2 ZM555.5 623.0 H556.9 V637.4 H555.5 ZM556.9 617.7 H558.0 V635.0 H556.9 ZM558.0 619.4 H559.7 V640.9 H558.0 ZM559.7 622.4 H560.7 V643.4 H559.7 ZM560.7 619.2 H562.2 V643.1 H560.7 ZM562.2 622.8 H564.0 V643.2 H562.2 ZM564.0 609.0 H565.5 V634.8 H564.0 ZM565.5 614.9 H567.3 V636.1 H565.5 ZM567.3 617.7 H568.5 V640.8 H567.3 ZM568.5 618.3 H570.3 V637.5 H568.5 ZM570.3 618.6 H571.9 V633.2 H570.3 ZM571.9 603.1 H573.0 V642.0 H571.9 ZM573.0 630.1 H574.4 V635.6 H573.0 ZM574.4 619.6 H576.1 V642.5 H574.4 ZM576.1 619.3 H578.0 V641.5 H576.1 ZM578.0 601.8 H579.6 V639.3 H578.0 ZM579.6 614.2 H580.8 V643.4 H579.6 ZM580.8 624.1 H582.9 V640.0 H580.8 ZM582.9 618.9 H584.9 V643.4 H582.9 ZM584.9 621.4 H586.3 V637.6 H584.9 ZM586.3 623.9 H588.4 V640.2 H586.3 ZM588.4 616.8 H589.6 V636.1 H588.4 ZM589.6 622.8 H590.7 V638.5 H589.6 ZM590.7 617.8 H592.2 V635.4 H590.7 ZM592.2 623.8 H593.2 V637.5 H592.2 ZM593.2 620.5 H594.7 V641.1 H593.2 ZM594.7 605.5 H596.0 V640.2 H594.7 ZM596.0 609.9 H597.4 V639.8 H596.0 ZM597.4 622.8 H599.0 V643.4 H597.4 ZM599.0 608.7 H600.2 V637.8 H599.0 ZM600.2 617.4 H602.2 V643.4 H600.2 ZM602.2 615.2 H603.4 V639.8 H602.2 ZM603.4 618.7 H604.5 V635.6 H603.4 ZM604.5 622.4 H605.8 V632.7 H604.5 ZM605.8 622.8 H606.9 V637.8 H605.8 ZM606.9 623.3 H608.2 V636.3 H606.9 ZM608.2 603.9 H610.0 V631.9 H608.2 ZM610.0 620.8 H611.2 V636.7 H610.0 ZM611.2 618.9 H612.2 V635.1 H611.2 ZM612.2 618.6 H613.8 V639.0 H612.2 ZM613.8 620.9 H615.3 V636.5 H613.8 ZM615.3 612.1 H616.6 V638.2 H615.3 ZM616.6 612.9 H617.9 V630.8 H616.6 ZM617.9 623.1 H619.0 V637.1 H617.9 ZM619.0 617.4 H620.9 V643.4 H619.0 ZM620.9 632.7 H622.5 V640.1 H620.9 ZM622.5 619.4 H623.8 V637.5 H622.5 ZM623.8 622.7 H625.5 V637.8 H623.8 ZM625.5 606.6 H626.8 V638.3 H625.5 ZM626.8 623.3 H628.5 V640.3 H626.8 ZM628.5 616.9 H629.4 V640.4 H628.5 ZM629.4 616.5 H630.3 V643.4 H629.4 ZM630.3 617.4 H632.3 V643.4 H630.3 ZM632.3 623.0 H633.5 V643.4 H632.3 ZM633.5 603.4 H635.3 V643.4 H633.5 ZM635.3 623.2 H636.7 V637.3 H635.3 ZM636.7 622.1 H638.5 V634.8 H636.7 ZM638.5 606.7 H640.0 V638.4 H638.5 ZM640.0 621.0 H641.0 V637.6 H640.0 ZM641.0 621.4 H642.5 V638.4 H641.0 ZM642.5 616.8 H642.6 V630.4 H642.5 Z M656.2 615.1 H657.8 V634.6 H656.2 ZM657.8 621.3 H658.9 V638.6 H657.8 ZM658.9 607.9 H660.3 V631.3 H658.9 ZM660.3 632.4 H662.0 V636.7 H660.3 ZM662.0 619.5 H663.4 V638.4 H662.0 ZM663.4 623.6 H665.0 V636.1 H663.4 ZM665.0 612.1 H666.8 V628.2 H665.0 ZM666.8 622.6 H668.6 V638.4 H666.8 ZM668.6 622.5 H669.7 V639.8 H668.6 ZM669.7 620.4 H671.0 V638.9 H669.7 ZM671.0 599.2 H672.7 V637.9 H671.0 ZM672.7 616.5 H674.3 V639.7 H672.7 ZM674.3 602.5 H675.6 V630.2 H674.3 ZM675.6 625.4 H677.5 V637.4 H675.6 ZM677.5 618.8 H678.8 V640.1 H677.5 ZM678.8 618.2 H679.8 V643.4 H678.8 ZM679.8 617.3 H681.2 V631.0 H679.8 ZM681.2 613.5 H683.2 V641.4 H681.2 ZM683.2 602.2 H684.7 V640.9 H683.2 ZM684.7 622.1 H685.6 V637.2 H684.7 ZM685.6 621.9 H686.9 V633.9 H685.6 ZM686.9 620.7 H688.8 V630.1 H686.9 ZM688.8 613.9 H689.8 V641.7 H688.8 ZM689.8 622.2 H690.8 V638.0 H689.8 ZM690.8 620.9 H691.8 V635.7 H690.8 ZM691.8 617.0 H693.5 V632.8 H691.8 ZM693.5 617.8 H695.0 V631.7 H693.5 ZM695.0 618.1 H695.9 V636.6 H695.0 ZM695.9 621.1 H697.3 V637.9 H695.9 ZM697.3 617.7 H698.3 V643.4 H697.3 ZM698.3 616.9 H700.2 V641.5 H698.3 ZM700.2 630.3 H701.1 V642.8 H700.2 ZM701.1 622.3 H702.8 V637.2 H701.1 ZM702.8 619.2 H703.8 V628.6 H702.8 ZM703.8 619.4 H705.5 V640.0 H703.8 ZM705.5 620.1 H707.4 V641.5 H705.5 ZM707.4 607.2 H708.3 V643.4 H707.4 ZM708.3 618.8 H709.8 V641.2 H708.3 ZM709.8 613.4 H710.9 V630.9 H709.8 ZM710.9 621.5 H712.3 V630.3 H710.9 ZM712.3 619.6 H713.2 V640.7 H712.3 ZM713.2 621.0 H714.4 V632.0 H713.2 ZM714.4 615.4 H716.4 V640.1 H714.4 ZM716.4 602.1 H718.0 V640.3 H716.4 ZM718.0 619.8 H720.0 V642.3 H718.0 ZM720.0 617.1 H721.2 V634.0 H720.0 ZM721.2 619.7 H722.5 V634.1 H721.2 ZM722.5 622.4 H723.5 V634.6 H722.5 ZM723.5 601.4 H724.6 V641.4 H723.5 ZM724.6 608.7 H725.8 V636.6 H724.6 ZM725.8 620.8 H727.9 V631.6 H725.8 ZM727.9 613.7 H729.8 V635.2 H727.9 ZM729.8 622.5 H731.5 V629.1 H729.8 ZM731.5 616.5 H732.6 V642.5 H731.5 ZM732.6 613.6 H734.4 V632.1 H732.6 ZM734.4 619.4 H736.4 V643.4 H734.4 ZM736.4 617.3 H737.7 V641.2 H736.4 ZM737.7 603.8 H739.0 V634.6 H737.7 ZM739.0 621.3 H740.5 V633.9 H739.0 ZM740.5 613.7 H741.8 V636.0 H740.5 ZM741.8 620.8 H743.1 V634.6 H741.8 ZM743.1 615.7 H744.7 V637.6 H743.1 ZM744.7 613.0 H745.9 V635.9 H744.7 ZM745.9 614.3 H747.4 V633.6 H745.9 ZM747.4 598.5 H748.7 V634.9 H747.4 ZM748.7 622.9 H750.1 V628.6 H748.7 ZM750.1 617.1 H751.2 V643.4 H750.1 ZM751.2 614.6 H752.3 V636.3 H751.2 ZM752.3 615.0 H754.1 V635.8 H752.3 ZM754.1 622.1 H755.5 V632.4 H754.1 ZM755.5 616.7 H757.4 V638.3 H755.5 ZM757.4 622.3 H758.5 V637.0 H757.4 ZM758.5 625.2 H760.6 V643.4 H758.5 ZM760.6 617.4 H762.3 V643.4 H760.6 ZM762.3 622.9 H764.2 V640.0 H762.3 ZM764.2 616.3 H765.3 V642.5 H764.2 ZM765.3 617.6 H766.4 V643.1 H765.3 ZM766.4 610.5 H767.3 V640.3 H766.4 ZM767.3 619.8 H768.9 V632.0 H767.3 ZM768.9 623.0 H769.9 V639.9 H768.9 ZM769.9 630.2 H771.0 V643.0 H769.9 ZM771.0 608.9 H772.0 V635.5 H771.0 ZM772.0 623.1 H773.5 V632.8 H772.0 ZM773.5 620.0 H774.7 V640.8 H773.5 ZM774.7 608.3 H775.7 V631.5 H774.7 ZM775.7 631.2 H777.3 V640.1 H775.7 ZM777.3 614.3 H779.2 V637.6 H777.3 ZM779.2 617.3 H780.5 V643.4 H779.2 ZM780.5 631.5 H782.5 V643.4 H780.5 ZM782.5 615.7 H784.2 V634.7 H782.5 ZM784.2 615.5 H785.9 V638.9 H784.2 ZM785.9 622.4 H787.3 V643.4 H785.9 ZM787.3 619.4 H789.0 V635.8 H787.3 ZM789.0 616.1 H790.3 V641.5 H789.0 ZM790.3 618.7 H791.5 V635.6 H790.3 ZM791.5 620.1 H792.2 V641.2 H791.5 Z" fill="#1c69ab" stroke="#1c69ab" stroke-width=".55" stroke-linejoin="round"/>
<path d="M320.3 642.0 L320.8 626.0 L321.5 624.0 L321.7 590.0 L322.2 587.0 L323.7 585.0 L323.9 557.0 L324.6 553.0 L324.3 549.0 L325.0 547.0 L325.6 520.0 L326.2 499.0 L326.4 458.0 L327.9 456.0 L328.5 431.0 L329.0 427.9 L329.5 395.4 L329.5 429.2 L329.1 398.0 L329.2 429.6 L329.4 395.5 L329.9 432.0 L329.7 396.3 L330.3 432.7 L330.4 397.4 L330.9 427.3 L330.9 396.7 L330.3 427.7 L330.6 399.9 L330.6 430.5 L331.2 397.2 L331.2 427.4 L330.9 396.2 L331.6 429.6 L331.4 398.5 L331.7 428.8 L332.1 399.2 L331.7 430.4 L332.1 400.3 L332.4 428.7 L332.8 395.7 L332.4 431.5 L332.2 397.9 L332.2 431.0 L333.1 398.4 L333.3 428.9 L333.3 398.6 L333.3 429.7 L333.7 400.7 L333.4 397.0 L333.8 359.0 L334.4 300.0 L334.9 257.0 L335.5 215.0 L336.1 178.0 L336.2 141.0 L337.1 140.0 L337.2 114.0 L338.4 113.0 L338.6 96.0 L339.0 88.7 L339.4 93.0 L339.8 88.7 L340.2 96.0 L340.6 122.0 L342.0 123.0 L342.4 175.0 L343.4 177.0 L343.6 225.0 L344.1 257.0 L344.7 310.0 L345.1 359.0 L345.3 400.0 L345.4 446.0 L345.3 489.0 L345.0 448.2 L345.7 491.0 L346.0 445.7 L345.7 489.0 L345.4 446.8 L345.7 485.7 L345.7 448.6 L345.9 486.5 L346.3 449.2 L346.1 487.7 L346.7 449.3 L347.1 490.2 L346.6 446.5 L346.8 490.3 L347.6 444.9 L346.9 486.4 L347.1 446.9 L347.5 486.6 L347.1 446.5 L347.6 488.4 L348.3 448.1 L348.0 478.7 L348.2 444.3 L348.6 479.7 L348.7 448.8 L348.3 477.4 L348.1 447.8 L348.2 475.4 L348.5 445.0 L348.7 475.3 L348.5 444.9 L348.7 477.2 L348.8 449.2 L350.6 468.0 L351.0 490.0 L351.3 512.0 L352.7 514.0 L353.0 567.0 L353.5 570.0 L353.8 624.0 L354.2 630.0 M642.3 634.0 L642.8 615.0 L643.2 624.0 L643.5 600.0 L643.9 612.0 L644.1 596.0 L644.6 590.0 L645.0 577.0 L645.6 560.0 L646.2 543.0 L646.6 515.0 L647.0 490.0 L647.2 481.0 L647.4 480.0 L647.5 455.0 L648.2 452.0 L648.6 420.0 L648.8 407.0 L649.6 404.0 L649.3 398.0 L650.2 400.0 L650.7 386.3 L651.0 395.0 L651.3 402.0 L651.7 404.0 L652.0 415.0 L652.5 430.0 L652.9 450.0 L653.3 472.0 L653.6 476.0 L653.9 490.0 L654.1 520.0 L654.4 558.0 L654.9 562.0 L654.5 568.0 L654.9 590.0 L655.3 610.0 L655.6 625.0 L656.0 634.0" fill="none" stroke="#1f6cad" stroke-width="1.350" stroke-linejoin="round"/>
<path d="M329.0 427.9 L329.5 395.4 L329.5 429.2 L329.1 398.0 L329.2 429.6 L329.4 395.5 L329.9 432.0 L329.7 396.3 L330.3 432.7 L330.4 397.4 L330.9 427.3 L330.9 396.7 L330.3 427.7 L330.6 399.9 L330.6 430.5 L331.2 397.2 L331.2 427.4 L330.9 396.2 L331.6 429.6 L331.4 398.5 L331.7 428.8 L332.1 399.2 L331.7 430.4 L332.1 400.3 L332.4 428.7 L332.8 395.7 L332.4 431.5 L332.2 397.9 L332.2 431.0 L333.1 398.4 L333.3 428.9 L333.3 398.6 L333.3 429.7 L333.7 400.7 M345.3 489.0 L345.0 448.2 L345.7 491.0 L346.0 445.7 L345.7 489.0 L345.4 446.8 L345.7 485.7 L345.7 448.6 L345.9 486.5 L346.3 449.2 L346.1 487.7 L346.7 449.3 L347.1 490.2 L346.6 446.5 L346.8 490.3 L347.6 444.9 L346.9 486.4 L347.1 446.9 L347.5 486.6 L347.1 446.5 L347.6 488.4 L348.3 448.1 L348.0 478.7 L348.2 444.3 L348.6 479.7 L348.7 448.8 L348.3 477.4 L348.1 447.8 L348.2 475.4 L348.5 445.0 L348.7 475.3 L348.5 444.9 L348.7 477.2 L348.8 449.2" fill="none" stroke="#1c69ab" stroke-width="1.700" stroke-linejoin="round"/>
</svg>
<div class="yl" style="top:64.8px">-40.1</div>
<div class="yl" style="top:86.0px">-42</div>
<div class="yl" style="top:108.4px">-44</div>
<div class="yl" style="top:130.8px">-46</div>
<div class="yl" style="top:153.1px">-48</div>
<div class="yl" style="top:175.5px">-50</div>
<div class="yl" style="top:197.9px">-52</div>
<div class="yl" style="top:220.2px">-54</div>
<div class="yl" style="top:242.6px">-56</div>
<div class="yl" style="top:265.0px">-58</div>
<div class="yl" style="top:287.3px">-60</div>
<div class="yl" style="top:309.7px">-62</div>
<div class="yl" style="top:332.1px">-64</div>
<div class="yl" style="top:354.4px">-66</div>
<div class="yl" style="top:376.8px">-68</div>
<div class="yl" style="top:399.2px">-70</div>
<div class="yl" style="top:421.5px">-72</div>
<div class="yl" style="top:443.9px">-74</div>
<div class="yl" style="top:466.3px">-76</div>
<div class="yl" style="top:488.6px">-78</div>
<div class="yl" style="top:511.0px">-80</div>
<div class="yl" style="top:533.4px">-82</div>
<div class="yl" style="top:555.7px">-84</div>
<div class="yl" style="top:578.1px">-86</div>
<div class="yl" style="top:600.5px">-88</div>
<div class="yl" style="top:633.8px">-90.98</div>
<div class="ytk" style="top:73.5px"></div>
<div class="ytk" style="top:94.5px"></div>
<div class="ytk" style="top:117.5px"></div>
<div class="ytk" style="top:139.5px"></div>
<div class="ytk" style="top:161.5px"></div>
<div class="ytk" style="top:184.5px"></div>
<div class="ytk" style="top:206.5px"></div>
<div class="ytk" style="top:228.5px"></div>
<div class="ytk" style="top:251.5px"></div>
<div class="ytk" style="top:273.5px"></div>
<div class="ytk" style="top:295.5px"></div>
<div class="ytk" style="top:318.5px"></div>
<div class="ytk" style="top:340.5px"></div>
<div class="ytk" style="top:363.5px"></div>
<div class="ytk" style="top:385.5px"></div>
<div class="ytk" style="top:407.5px"></div>
<div class="ytk" style="top:430.5px"></div>
<div class="ytk" style="top:452.5px"></div>
<div class="ytk" style="top:474.5px"></div>
<div class="ytk" style="top:497.5px"></div>
<div class="ytk" style="top:519.5px"></div>
<div class="ytk" style="top:541.5px"></div>
<div class="ytk" style="top:564.5px"></div>
<div class="ytk" style="top:586.5px"></div>
<div class="ytk" style="top:609.5px"></div>
<div class="ytk" style="top:631.5px"></div>
<div class="ytk" style="top:642.5px"></div>
<div class="xl" style="left:115.4px">422</div>
<div class="xl" style="left:193.4px">423</div>
<div class="xl" style="left:271.4px">424</div>
<div class="xl" style="left:349.4px">425</div>
<div class="xl" style="left:427.4px">426</div>
<div class="xl" style="left:505.4px">427</div>
<div class="xl" style="left:583.3px">428</div>
<div class="xl" style="left:661.3px">429</div>
<div class="xtk" style="left:134.1px"></div>
<div class="xtk" style="left:212.1px"></div>
<div class="xtk" style="left:290.1px"></div>
<div class="xtk" style="left:368.1px"></div>
<div class="xtk" style="left:446.1px"></div>
<div class="xtk" style="left:524.1px"></div>
<div class="xtk" style="left:602.0px"></div>
<div class="xtk" style="left:680.0px"></div>
<div class="xtk" style="left:758.0px"></div>
<div class="xtk" style="left:88.2px"></div>
<div class="xtk" style="left:790.4px"></div>
<div class="xl" style="left:52px;width:71px;text-align:center;letter-spacing:-.35px">421.411473</div>
<div class="xl" style="left:754.900px;width:71px;text-align:center;letter-spacing:-.42px">430.415044</div>
<div class="t" style="left:-2px;top:348px;width:68px;text-align:center;font-size:12.5px;letter-spacing:.55px;-webkit-text-stroke:.25px #1b1b1b;transform:rotate(-90deg);transform-origin:50% 50%;height:18px;line-height:18px">Amplitude</div>

<div class="t" style="left:94px;top:82.600px;font-size:12.7px">Spatial Resolution(um)</div>
<div class="abs" style="left:95px;top:104px;width:61px;height:24px;border-top:2px solid #d0d0d0;border-left:2px solid #cfcfcf;border-radius:1px"></div>
<div class="t" style="left:113px;top:109.500px;font-size:12.5px;letter-spacing:-.5px">8.43</div>

<!-- bottom controls -->
<div class="cb" style="left:74.500px;top:674.300px"></div>
<svg class="abs" style="left:74.500px;top:674.300px" width="14" height="14"><path d="M2.5 7 L5.5 10.5 L11.5 3" stroke="#222" stroke-width="1.3" fill="none"/></svg>
<div class="t" style="left:91px;top:673px;font-size:13px">Plot A</div>
<div class="cb" style="left:130px;top:674.300px"></div>
<div class="t" style="left:146px;top:673px;font-size:13px">Plot B</div>
<div class="abs" style="left:186.500px;top:670px;width:21px;height:21px;border-radius:50%;background:radial-gradient(circle at 45% 42%,#b2b2b2 0%,#a2a2a2 50%,#7a7a7a 100%);border:2px solid #303030"></div>

<div class="abs" style="left:378.500px;top:667.500px;width:116px;height:23.500px;background:#fff;border:2px solid;border-color:#8d94a8 #d9dde8 #dfe3ec #8d94a8;text-align:center;font-size:13px;line-height:19px;padding-right:10px">Length(mm)</div>
<div class="t" style="left:517.500px;top:677px;font-size:11.500px;font-weight:bold;letter-spacing:.1px">G I</div>
<div class="abs" style="left:535.500px;top:672px;width:58px;height:19.500px;background:#e0e0de;border:2.500px solid;border-color:#8e97b0 #bcc4da #c3cadd #8e97b0;text-align:center;font-size:10px;line-height:15px;color:#333;letter-spacing:-.2px">1.467700</div>

<!-- toolbar icons -->
<svg class="abs" style="left:0;top:0" width="1080" height="702" viewBox="0 0 1080 702">
 <rect x="611.500" y="672" width="90.300" height="17.200" fill="#e5e5e2"/>
 <path d="M634 672 V689.200 M656.600 672 V689.200 M679.500 672 V689.200" stroke="#d6d9e2" stroke-width=".8"/>
 <line x1="619" y1="672" x2="619" y2="689.200" stroke="#f3a545" stroke-width="1.900"/>
 <line x1="626.800" y1="672" x2="626.800" y2="689.200" stroke="#e04040" stroke-width="1.900"/>
 <line x1="635" y1="677" x2="655.600" y2="677" stroke="#e04040" stroke-width="2"/>
 <line x1="635" y1="683.200" x2="655.600" y2="683.200" stroke="#f3a545" stroke-width="2"/>
 <path d="M657 681.500 C660.500 686 663.500 683 665.500 678 C666.500 675 667.300 673 667.900 672.300 C668.500 673 669.300 675 670.300 678 C672.300 683 675.300 686 679 682.500" fill="none" stroke="#e04646" stroke-width="1.500"/>
 <line x1="667.900" y1="673" x2="667.900" y2="689.200" stroke="#e04646" stroke-width="1.500" stroke-dasharray="1.500 1"/>
 <path d="M680 681.500 C683.500 686 686.500 683 688.500 678 C689.500 675 690.400 673 691 672.300 C691.600 673 692.500 675 693.500 678 C695.500 683 698.500 686 701.700 682.500" fill="none" stroke="#f1b04a" stroke-width="1.500"/>
 <line x1="691" y1="674" x2="691" y2="689.200" stroke="#f1b04a" stroke-width="1.300"/>
 <rect x="704" y="672" width="19.300" height="17.200" fill="#c8c8c5"/>
 <path d="M713.500 673.400 V687.800 M706.500 680.300 H721" stroke="#151515" stroke-width="1.700"/>
 <circle cx="713.500" cy="680.300" r="1.600" fill="#151515"/>
 <rect x="707" y="674.800" width="2" height="2" fill="#3d6b3d"/>
 <rect x="726.400" y="672" width="18.200" height="17.200" fill="#c8c8c5"/>
 <circle cx="737.600" cy="678.400" r="3.700" fill="#f0f0ff" stroke="#2a2a60" stroke-width="1.300"/>
 <path d="M737.600 676.200 V680.600 M735.400 678.400 H739.800" stroke="#3535c5" stroke-width="1.200"/>
 <path d="M734.800 681.200 L728.300 687.800" stroke="#151515" stroke-width="2"/>
 <path d="M737.300 685.300 h5 l-2.500 2.600 z" fill="#151515"/>
 <rect x="728.200" y="674.500" width="2" height="2" fill="#3d6b3d"/>
 <rect x="748.100" y="672" width="20.900" height="17.200" fill="#6c6c69"/>
 <path d="M755.300 688 L753 682.300 L754.300 681.300 L756.300 683.500 L756.300 676.300 L757.800 675.800 L758.400 680 L758.800 674.500 L760.400 674.500 L760.700 680 L761.400 675.300 L762.900 675.600 L762.900 680.800 L763.800 677.800 L765.100 678.200 L764.600 684 L763.300 688 Z" fill="#f1f1ee" stroke="#2a2a2a" stroke-width=".7"/>
 <rect x="750.800" y="674.300" width="2.200" height="2.200" fill="#79c47c"/>
</svg>

<!-- logo -->
<svg class="abs" style="left:0;top:0" width="1080" height="702" viewBox="0 0 1080 702">
 <g transform="translate(815,70) scale(0.0997)">
  <path fill-rule="evenodd" fill="#3e3e42" d="M367 88 A287 271 0 1 1 366.900 88 Z M375 163 A208 198 0 1 0 375.100 163 Z"/>
  <path fill="#d9deea" d="M150 330 C175 385 215 400 260 392 C310 380 340 320 400 293 C470 262 580 262 662 278 L722 325 L717 352 C630 348 570 365 522 402 C472 447 452 512 407 562 C365 610 310 632 258 614 C200 560 150 450 150 330 Z"/>
  <path fill="#87878b" d="M165 345 C185 385 215 398 260 392 C310 380 345 322 400 297 C470 268 580 270 652 288 C580 290 500 300 450 335 C400 372 370 440 310 475 C260 500 210 480 185 440 C170 410 163 375 165 345 Z"/>
  <path fill="#3e3e42" d="M158 410 C190 480 240 510 300 498 C350 485 385 420 440 370 C500 320 600 300 706 333 L700 342 C620 335 560 350 510 390 C460 435 440 500 395 550 C350 600 300 615 258 600 C190 560 150 480 158 410 Z"/>
 </g>
</svg>
<div class="t" style="left:895px;top:96.500px;font-size:20px;color:#44444a;letter-spacing:-.78px;-webkit-text-stroke:.35px #44444a">Sensing the Mega</div>

<!-- inner box -->
<div class="abs" style="left:818px;top:146px;width:232.300px;height:321.500px;background:#a9b3ce;box-shadow:0 0 1px #a9b3ce"></div>
<div class="hd" style="left:828px;top:154.500px">Data </div>
<div class="t" style="left:842px;top:178.500px;font-size:13.900px">Decimation</div>
<div class="t" style="left:944px;top:178.500px;font-size:13.900px">High/Normal</div>
<div class="sunk" style="left:845px;top:199px;width:62px;height:26px;line-height:20.500px">20</div>
<div class="abs" style="left:947px;top:197.500px;width:78px;height:29.500px;background:#c1c1c1;border:1px solid #98a0b3"></div>
<div class="abs" style="left:948px;top:198.500px;width:19.500px;height:27.500px;background:#66f612;border:1px solid #3f9a14"></div>
<div class="abs" style="left:967px;top:198.500px;width:18.500px;height:27.500px;background:#66f612;border:1px solid #3f9a14"></div>
<div class="hd" style="left:828px;top:244px;font-size:16.100px">calibration</div>
<div class="btn" style="left:848px;top:276.500px;width:58px;height:32px;line-height:30px;letter-spacing:-.35px;padding-left:2px">Redo</div>
<div class="btn" style="left:949px;top:276.500px;width:58px;height:32px;line-height:30px;letter-spacing:-.2px;padding-left:3px">AUTO</div>
<div class="hd" style="left:828px;top:336px;letter-spacing:-.3px">Data Saving</div>
<div class="sunk" style="left:832.500px;top:364px;width:105.500px;height:25.500px;line-height:21px">0</div>
<!-- save icon -->
<svg class="abs" style="left:985px;top:364.500px" width="22" height="22" viewBox="0 0 22 23">
 <rect x="0" y="0" width="22" height="23" fill="#f1f3fc"/>
 <path d="M3.500 3.500 H16 L18.500 6 V19.500 H3.500 Z" fill="#e9edfb" stroke="#6f88da" stroke-width="1.100"/>
 <rect x="7" y="3.500" width="8" height="5" fill="#fbfcff" stroke="#7d93dd" stroke-width=".9"/>
 <rect x="12.200" y="4.500" width="1.500" height="3" fill="#5d79d2"/>
 <rect x="6" y="12" width="10" height="7.500" fill="#f6f8ff" stroke="#7d93dd" stroke-width=".9"/>
 <rect x="7.500" y="15.300" width="7" height="2.400" fill="#a9b8ea"/>
 <path d="M8 13.800 H12" stroke="#8fa2e2" stroke-width=".8"/>
</svg>
<div class="abs" style="left:832.500px;top:401px;width:111px;height:24.500px;background:#fff;border:3px solid;border-color:#8c95af #b4bdd6 #b9c2d9 #8c95af"></div>
<div class="abs" style="left:835.500px;top:404px;width:9.500px;height:18.500px;background:#d6d6d6"></div>
<svg class="abs" style="left:836px;top:407px" width="9" height="14"><path d="M1.500 1 h3.500 v4.500 h-3.500 z M3.300 5.500 v3 M2.300 8.500 h5 v4 h-5 z" fill="none" stroke="#111" stroke-width="1.3"/></svg>
<div class="t" style="left:847px;top:407px;font-size:12.5px">C:\...p\OLI_Data</div>
<!-- folder btn -->
<div class="abs" style="left:982.500px;top:400.500px;width:29.500px;height:27px;background:linear-gradient(180deg,#d0d0cc,#c2c2be);border:1px solid;border-color:#e4e4e0 #7d7d7d #6e6e6e #e4e4e0;box-shadow:1px 1px 1px rgba(60,60,80,.5)"></div>
<svg class="abs" style="left:988.500px;top:407.500px" width="18" height="13" viewBox="0 0 20 14">
 <path d="M1 12.500 V2.500 C1 1.500 1.500 1 2.500 1 H6 L7.500 3 H13.500 V6" fill="#d4d42c" stroke="#3a3a12" stroke-width="1.200"/>
 <path d="M1 12.500 L4.800 6 H19 L14.500 12.500 Z" fill="#6c6c5e" stroke="#26261c" stroke-width="1.200"/>
 <path d="M2.200 3 V10" stroke="#f2f27a" stroke-width="1"/>
</svg>
<div class="t" style="left:832px;top:439px;font-size:14.5px;color:#22242c;white-space:pre;word-spacing:.6px">Auto  Saving</div>
<div class="abs" style="left:976px;top:440.500px;width:41px;height:15px;background:radial-gradient(ellipse 16px 5px at 30% 28%,#4f8a3a 0%,rgba(60,110,40,.5) 55%,rgba(31,74,16,0) 100%),linear-gradient(180deg,#245614 0%,#1d470f 50%,#1a400d 100%);border:1px solid;border-color:#8a96ad #c5cde0 #c5cde0 #8a96ad"></div>

<div class="btn" style="left:820px;top:484px;width:135px;height:32px;line-height:30px;letter-spacing:-.25px;padding-left:2px">Channel Selection</div>
<div class="btn" style="left:975px;top:484px;width:71px;height:32px;line-height:30px;font-size:12.300px;word-spacing:0px;letter-spacing:-.55px;padding-left:1px">SET UP</div>
<div class="btn" style="left:820px;top:536px;width:135px;height:31px;line-height:29px;padding-left:3px">Judgement Line</div>
<div class="btn" style="left:975px;top:536px;width:71px;height:31px;line-height:29px;padding-left:2px">DATA</div>
<div class="btn" style="left:820px;top:593px;width:226px;height:44px;line-height:42px;letter-spacing:-.5px;padding-left:1px">SCAN</div>
<div class="abs" style="left:869.500px;top:649px;width:14.500px;height:14.500px;background:#fff;border:1.500px solid #3a3e52"></div>
<div class="t" style="left:891.500px;top:644px;font-size:19px;color:#1c1c22;letter-spacing:-.15px">continuous</div>

<!-- watermark -->
<svg class="abs" style="left:0;top:0" width="1080" height="702" viewBox="0 0 1080 702">
 <g transform="translate(940,630) scale(0.12963)" fill="none" stroke="#e4e8f4" stroke-width="10" stroke-linecap="round" stroke-linejoin="round" opacity=".9">
  <path d="M125 125 C200 140 320 180 395 235 M125 125 C180 200 280 270 370 285"/>
  <path d="M250 100 C310 130 370 170 410 215 M250 100 C260 170 310 230 360 262"/>
  <path d="M400 215 C410 170 470 145 530 160 L625 185 L535 198 C490 225 465 260 440 300 C400 360 310 390 250 440 C255 380 290 320 350 270"/>
  <path d="M445 195 C450 260 400 330 300 385"/>
  <g stroke-width="11.500" stroke="#e6eaf6" stroke-linecap="butt">
   <path transform="translate(545,258)" d="M22 2 H78 V38 H22 Z M22 20 H78 M12 50 H88 M5 66 H95 M50 50 C50 70 30 85 6 92 M52 68 C60 80 75 88 95 92"/>
   <path transform="translate(659,258)" d="M24 2 L6 22 M26 24 L4 50 M16 40 V92 M44 4 L34 18 M40 10 H62 M36 22 H64 V52 H36 Z M36 37 H64 M50 22 V52 M30 64 H70 M50 54 C50 75 42 85 30 92 M52 66 C56 78 62 86 72 92 M72 14 H96 M68 36 H100 M86 36 V84 C86 90 82 92 76 90"/>
   <path transform="translate(773,258)" d="M40 2 C30 10 18 14 6 16 M2 32 H48 M26 12 V92 M26 34 C20 50 12 62 2 70 M26 34 C32 46 40 54 48 58 M60 14 L70 24 M58 38 L68 48 M52 66 L100 56 M84 2 V92"/>
   <path transform="translate(887,258)" d="M2 24 H40 M22 2 V82 C22 90 16 92 8 88 M2 60 L40 46 M48 20 H98 M72 2 V40 M52 44 H90 C84 64 68 82 44 92 M56 50 C64 68 80 84 100 92"/>
  </g>
 </g>
 <text x="1010.600" y="686" font-size="8.600" font-family="Liberation Sans, sans-serif" font-weight="bold" fill="#e3e7f4" opacity=".85" textLength="58.400" lengthAdjust="spacing">MegaSense</text>
</svg>
</div></body></html>
